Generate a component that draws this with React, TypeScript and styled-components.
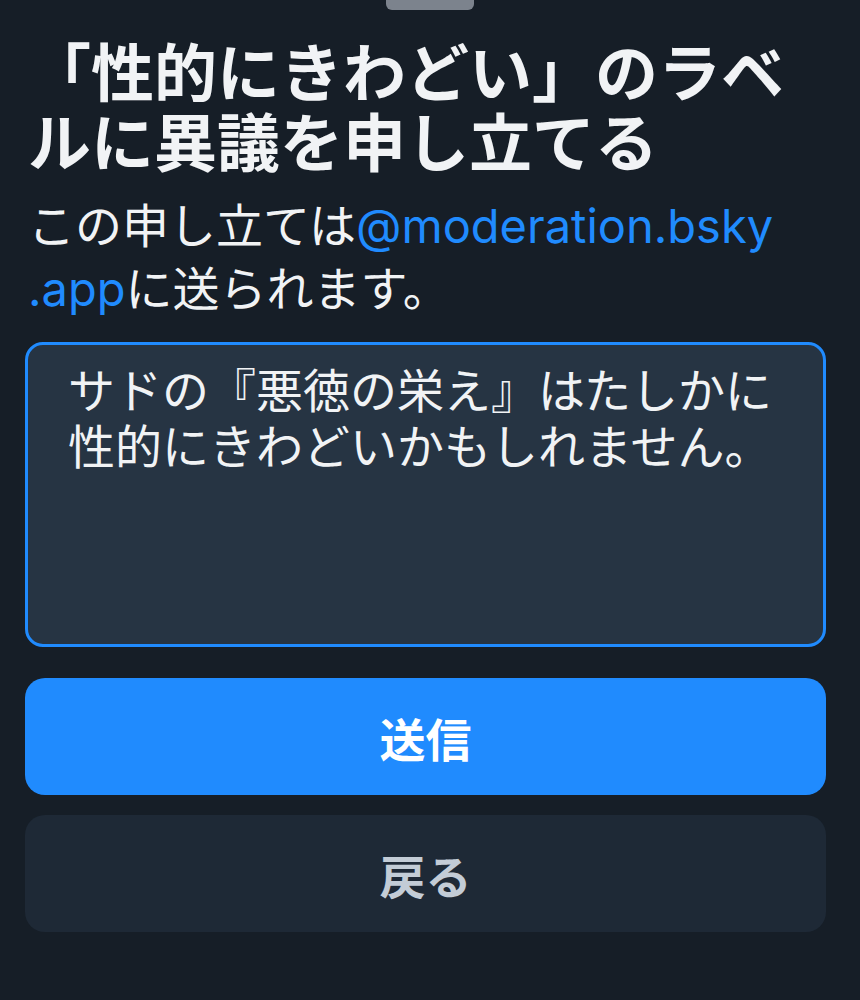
import styled, { createGlobalStyle } from "styled-components";

const GlobalStyle = createGlobalStyle`
  html, body {
    margin: 0;
    padding: 0;
    background: #161e27;
  }
  body {
    font-family: "Inter", "Noto Sans CJK JP", sans-serif;
    -webkit-font-smoothing: antialiased;
  }
`;

function App() {
  return (
    <>
      <GlobalStyle />
      <Sheet>
        <Handle />
        <Title>「性的にきわどい」のラベルに異議を申し立てる</Title>
        <Subtitle>
          この申し立ては
          <Mention>
            @moderation.bsky
            <br />
            .app
          </Mention>
          に送られます。
        </Subtitle>
        <Reason
          defaultValue={"サドの『悪徳の栄え』はたしかに性的にきわどいかもしれません。"}
        />
        <Actions>
          <Button $variant="primary">送信</Button>
          <Button $variant="secondary">戻る</Button>
        </Actions>
      </Sheet>
    </>
  );
}

export default App;

const Sheet = styled.div`
  width: 860px;
  height: 1000px;
  box-sizing: border-box;
  padding: 0 34px 0 25px;
  display: flex;
  flex-direction: column;
  background: #161e27;
  overflow: hidden;
`;

const Handle = styled.div`
  align-self: center;
  width: 88px;
  height: 10px;
  margin-left: 9px;
  border-radius: 0 0 6px 6px;
  background: #7c838d;
`;

const Title = styled.h1`
  margin: 24px 0 0 3px;
  font-family: "Noto Sans CJK JP", sans-serif;
  font-size: 63px;
  line-height: 70px;
  font-weight: 700;
  color: #f1f3f5;
`;

const Subtitle = styled.p`
  margin: 20px 0 0 3px;
  font-size: 47px;
  line-height: 63px;
  font-weight: 400;
  color: #f1f3f5;
`;

const Mention = styled.span`
  color: #208bfe;
`;

const Reason = styled.textarea`
  margin-top: 22px;
  width: 100%;
  height: 305px;
  box-sizing: border-box;
  padding: 15px 36px 11px 40px;
  border: 3px solid #208bfe;
  border-radius: 18px;
  background: #263443;
  color: #f1f3f5;
  font-family: "Noto Sans CJK JP", sans-serif;
  font-size: 47px;
  line-height: 56px;
  resize: none;
  outline: none;
  overflow: hidden;
`;

const Actions = styled.div`
  margin-top: 31px;
  display: flex;
  flex-direction: column;
  gap: 20px;
`;

const Button = styled.button<{ $variant: "primary" | "secondary" }>`
  height: 117px;
  border: none;
  border-radius: 20px;
  display: flex;
  align-items: center;
  justify-content: center;
  font-family: "Noto Sans CJK JP", sans-serif;
  font-size: 46px;
  font-weight: 700;
  background: ${(p) => (p.$variant === "primary" ? "#208bfe" : "#1e2936")};
  color: ${(p) => (p.$variant === "primary" ? "#ffffff" : "#c3ccd6")};
`;
